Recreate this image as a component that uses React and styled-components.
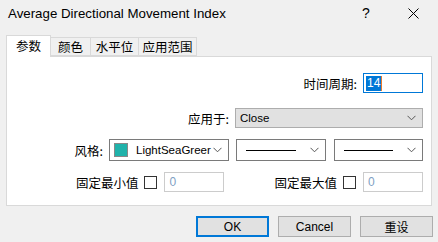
import React from 'react';
import styled, { createGlobalStyle } from 'styled-components';

const GlobalStyle = createGlobalStyle`
  html, body {
    margin: 0;
    padding: 0;
    background: #f0f0f0;
  }
  body {
    font-family: "Liberation Sans", "Noto Sans CJK SC", sans-serif;
    font-size: 12px;
    color: #000;
  }
`;

const Window = styled.div`
  width: 438px;
  height: 242px;
  background: #f0f0f0;
  display: flex;
  flex-direction: column;
  overflow: hidden;
`;

const TitleBar = styled.div`
  height: 30px;
  display: flex;
  align-items: center;
  padding-left: 8px;
  font-size: 13.3px;
  font-family: "Liberation Sans", sans-serif;
`;

const Title = styled.div`
  flex: 1;
  margin-top: -3px;
`;

const TitleButton = styled.div`
  width: ${p => p.$w}px;
  display: flex;
  justify-content: center;
  font-size: 14px;
  margin-top: -4px;
  margin-right: ${p => p.$mr || 0}px;
`;

const Tabs = styled.div`
  display: flex;
  align-items: flex-end;
  margin: 6px 0 0 6px;
  height: 20px;
  position: relative;
  z-index: 1;
`;

const Tab = styled.div`
  width: ${p => p.$w}px;
  height: ${p => (p.$active ? 22 : 19)}px;
  margin-bottom: ${p => (p.$active ? -1 : 0)}px;
  box-sizing: border-box;
  display: flex;
  align-items: center;
  justify-content: center;
  background: ${p => (p.$active ? '#fff' : '#f0f0f0')};
  border: 1px solid #d9d9d9;
  border-bottom: ${p => (p.$active ? 'none' : '1px solid #d9d9d9')};
  border-left: ${p => (p.$first ? '1px solid #d9d9d9' : 'none')};
  font-family: "Noto Sans CJK SC", sans-serif;
  font-size: 12.5px;
  padding-bottom: ${p => (p.$active ? 3 : 1)}px;
`;

const Panel = styled.div`
  margin: 0 6px;
  height: 150px;
  box-sizing: border-box;
  background: #fff;
  border: 1px solid #d9d9d9;
  padding: 16px 8px 0 0;
  display: flex;
  flex-direction: column;
`;

const Row = styled.div`
  display: flex;
  align-items: center;
  justify-content: flex-end;
  height: ${p => p.$h || 20}px;
  margin-top: ${p => p.$mt || 0}px;
`;

const Label = styled.span`
  font-family: "Noto Sans CJK SC", sans-serif;
  font-size: 12.5px;
  margin-right: ${p => p.$mr ?? 6}px;
  margin-left: ${p => p.$ml || 0}px;
`;

const PeriodInput = styled.div`
  width: 60px;
  height: 20px;
  box-sizing: border-box;
  border: 1px solid #0078d7;
  display: flex;
  align-items: center;
  padding-left: 2px;
`;

const Selected = styled.span`
  background: #0078d7;
  color: #fff;
  line-height: 15px;
  padding: 0 1px;
`;

const Caret = styled.span`
  width: 1px;
  height: 15px;
  background: #e87a2c;
`;

const Select = styled.div`
  width: ${p => p.$w}px;
  height: ${p => p.$h || 20}px;
  box-sizing: border-box;
  border: 1px solid ${p => (p.$flat ? '#adadad' : '#7a7a7a')};
  background: ${p => (p.$flat ? '#e1e1e1' : '#fff')};
  display: flex;
  align-items: center;
  padding: 0 6px 0 4px;
  margin-left: ${p => p.$ml || 0}px;
`;

const SelectText = styled.span`
  flex: 1;
  color: #000;
  white-space: nowrap;
  overflow: hidden;
  font-size: 11.5px;
`;

const Swatch = styled.span`
  width: 14px;
  height: 14px;
  box-sizing: border-box;
  border: 1px solid #888;
  background: #20b2aa;
  margin-right: 8px;
  flex-shrink: 0;
`;

const LineSample = styled.span`
  flex: 1;
  height: 1px;
  background: #000;
  margin: 0 14px 0 5px;
`;

const CheckBox = styled.span`
  width: 13px;
  height: 13px;
  box-sizing: border-box;
  border: 1px solid #333;
  background: #fff;
  margin-right: 7px;
`;

const NumInput = styled.div`
  width: 60px;
  height: 20px;
  box-sizing: border-box;
  border: 1px solid #cccccc;
  display: flex;
  align-items: center;
  padding-left: 4px;
  color: #7f9fc4;
`;

const Footer = styled.div`
  display: flex;
  justify-content: flex-end;
  gap: 9px;
  padding: 10px 5px 0 0;
`;

const Button = styled.div`
  width: 73px;
  height: 21px;
  box-sizing: border-box;
  border: ${p => (p.$default ? '2px solid #0078d7' : '1px solid #adadad')};
  background: #e1e1e1;
  display: flex;
  align-items: center;
  justify-content: center;
  font-family: "Liberation Sans", "Noto Sans CJK SC", sans-serif;
  font-size: 12px;
`;

const Chevron = () => (
  <svg width="9" height="6" viewBox="0 0 9 6">
    <path d="M0.5 0.8 L4.5 4.8 L8.5 0.8" fill="none" stroke="#555" strokeWidth="1" />
  </svg>
);

const CloseIcon = () => (
  <svg width="11" height="11" viewBox="0 0 11 11">
    <path d="M0.5 0.5 L10.5 10.5 M10.5 0.5 L0.5 10.5" fill="none" stroke="#000" strokeWidth="1" />
  </svg>
);

export default function App() {
  return (
    <>
      <GlobalStyle />
      <Window>
        <TitleBar>
          <Title>Average Directional Movement Index</Title>
          <TitleButton $w={20} $mr={27}>?</TitleButton>
          <TitleButton $w={20} $mr={15}><CloseIcon /></TitleButton>
        </TitleBar>
        <Tabs>
          <Tab $active $first $w={45}>参数</Tab>
          <Tab $w={40}>颜色</Tab>
          <Tab $w={48}>水平位</Tab>
          <Tab $w={58}>应用范围</Tab>
        </Tabs>
        <Panel>
          <Row>
            <Label>时间周期:</Label>
            <PeriodInput>
              <Selected>14</Selected>
              <Caret />
            </PeriodInput>
          </Row>
          <Row $mt={15}>
            <Label>应用于:</Label>
            <Select $w={188} $flat>
              <SelectText>Close</SelectText>
              <Chevron />
            </Select>
          </Row>
          <Row $mt={11} $h={22}>
            <Label>风格:</Label>
            <Select $w={120} $h={22}>
              <Swatch />
              <SelectText>LightSeaGreer</SelectText>
              <Chevron />
            </Select>
            <Select $w={90} $h={22} $ml={7}>
              <LineSample />
              <Chevron />
            </Select>
            <Select $w={89} $h={22} $ml={8}>
              <LineSample />
              <Chevron />
            </Select>
          </Row>
          <Row $mt={11}>
            <Label>固定最小值</Label>
            <CheckBox />
            <NumInput>0</NumInput>
            <Label $ml={50}>固定最大值</Label>
            <CheckBox />
            <NumInput>0</NumInput>
          </Row>
        </Panel>
        <Footer>
          <Button $default>OK</Button>
          <Button>Cancel</Button>
          <Button>重设</Button>
        </Footer>
      </Window>
    </>
  );
}
